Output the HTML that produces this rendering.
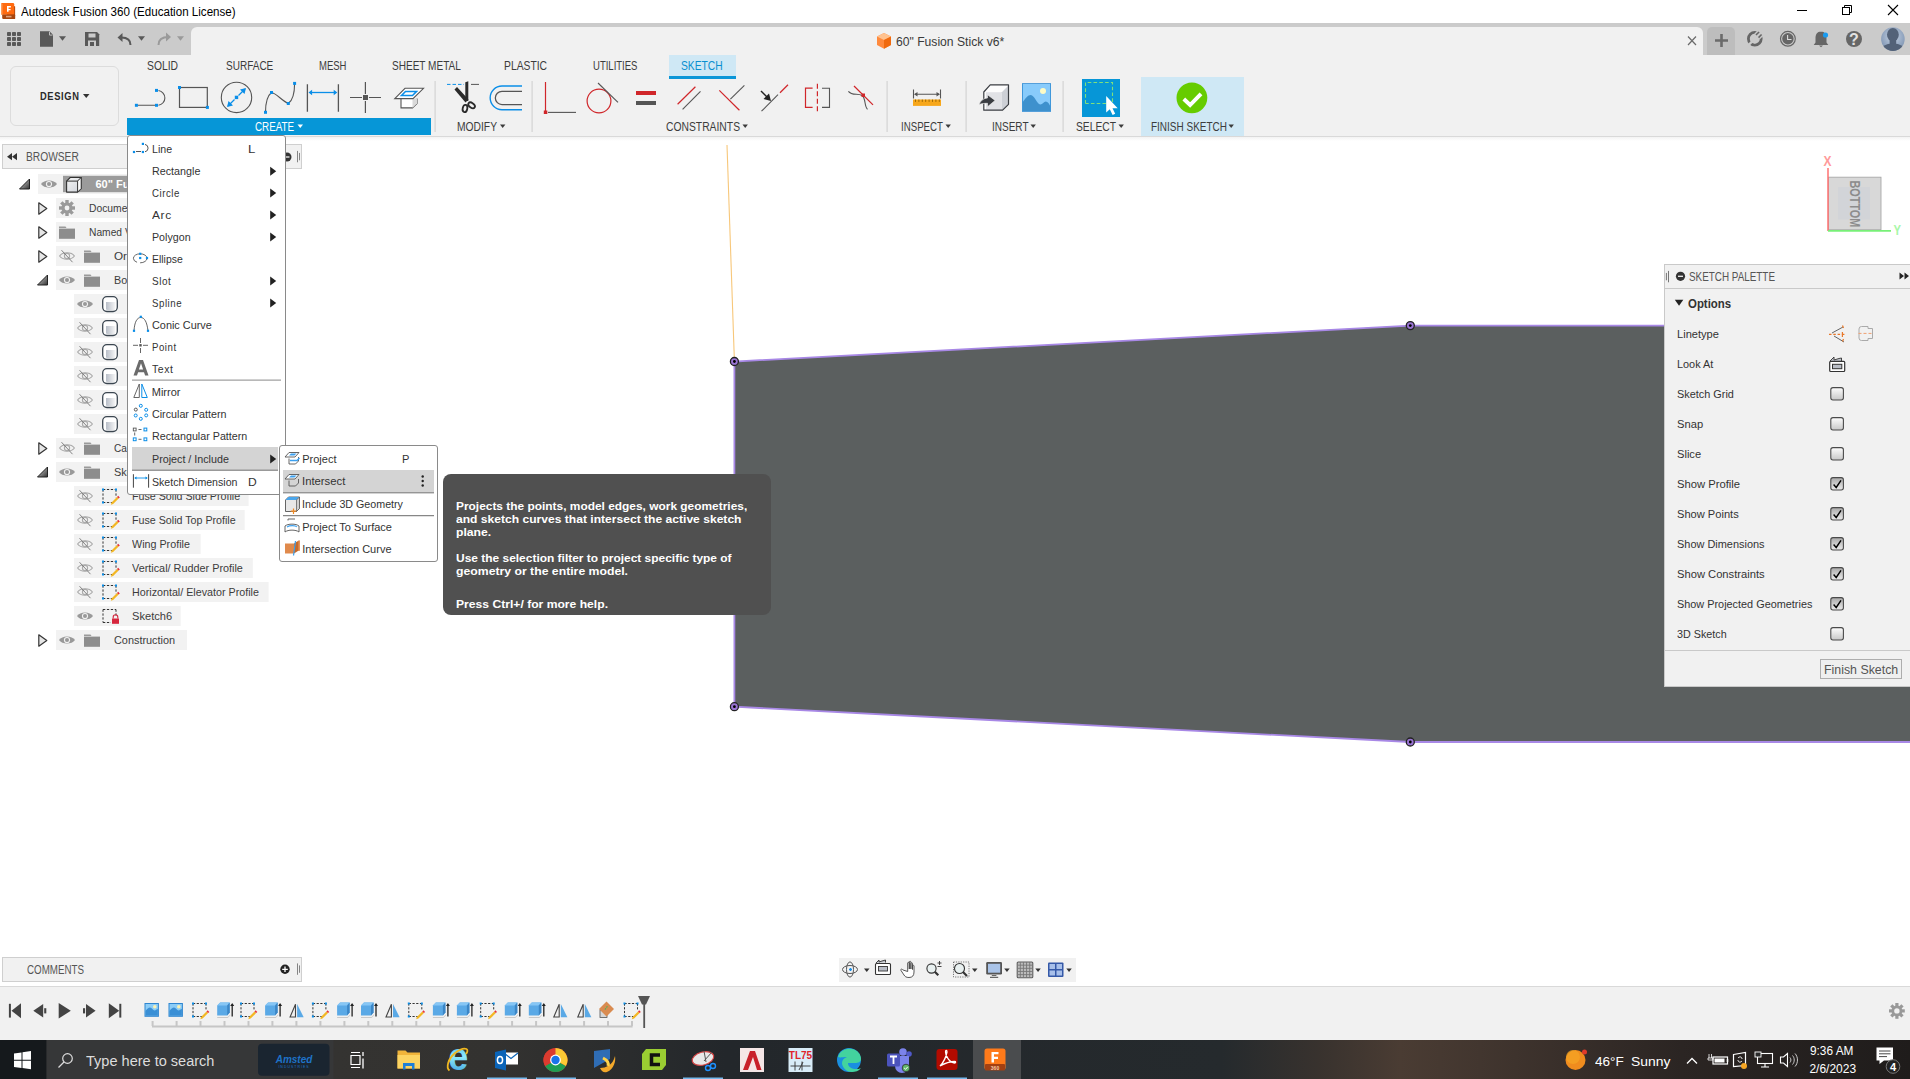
<!DOCTYPE html>
<html><head><meta charset="utf-8"><style>
*{box-sizing:border-box;margin:0;padding:0}
html,body{width:1910px;height:1079px;overflow:hidden;background:#fff;font-family:"Liberation Sans",sans-serif;color:#3c3c3c;position:relative}
div,svg{position:absolute}
.t{white-space:nowrap;line-height:normal;transform-origin:0 0}
svg{overflow:visible}

</style></head><body>
<div style="left:0;top:0;width:1910px;height:23px;background:#fff"></div>
<div style="left:0;top:23px;width:1910px;height:32px;background:#cbcbcb"></div>
<div style="left:191px;top:27px;width:1512px;height:28px;background:#f1f1f1;border-radius:6px 6px 0 0"></div>
<div style="left:1707px;top:27px;width:28px;height:28px;background:#bdbdbd;border-radius:5px 5px 0 0"></div>
<div style="left:0;top:55px;width:1910px;height:82px;background:#f1f1f1;border-bottom:1px solid #d9d9d9"></div>
<div style="left:0;top:137px;width:1910px;height:4px;background:linear-gradient(#f3f3f3,#fff)"></div>
<div style="left:0;top:986px;width:1910px;height:54px;background:#f1f1f1;border-top:1px solid #d9d9d9"></div>
<div style="left:0;top:1040px;width:1910px;height:39px;background:linear-gradient(90deg,#1f2225 0%,#343331 17.4%,#333230 26%,#2a2c2d 33%,#23272b 38%,#252a2d 64%,#38322e 69%,#4a3c33 73.3%,#42362f 77.5%,#2b2523 88%,#1f1c1b 100%)"></div>
<svg style="left:0;top:0" width="1910" height="55">
<path d="M14 6l1.1 .6V18.9H3z" fill="#b24a12"/>
<rect x="1" y="2.9" width="13.2" height="11.8" rx="1.3" fill="#ff6a10"/>
<rect x="1" y="4" width="1.5" height="10.5" fill="#ff9a55"/>
<rect x="2.2" y="14.5" width="12.9" height="4.4" rx="0.8" fill="#a8460f"/>
<path d="M7 6h3.9v1.5H8.6v1.4h2v1.4h-2v1.5H7z" fill="#fff"/>
<rect x="6" y="15.8" width="5.5" height="1.6" fill="#e8b89a" opacity="0.8"/>
<path d="M1797 10.5h10" stroke="#000" stroke-width="1"/>
<rect x="1842.5" y="7.5" width="7" height="7" fill="none" stroke="#000"/>
<path d="M1844.5 7.5v-2h7v7h-2" fill="none" stroke="#000"/>
<path d="M1888 5l10 10M1898 5l-10 10" stroke="#000" stroke-width="1.1"/>
<!-- strip icons -->
<g fill="#595959">
<rect x="7" y="32" width="4" height="4" rx="0.8"/><rect x="12" y="32" width="4" height="4" rx="0.8"/><rect x="17" y="32" width="4" height="4" rx="0.8"/>
<rect x="7" y="37" width="4" height="4" rx="0.8"/><rect x="12" y="37" width="4" height="4" rx="0.8"/><rect x="17" y="37" width="4" height="4" rx="0.8"/>
<rect x="7" y="42" width="4" height="4" rx="0.8"/><rect x="12" y="42" width="4" height="4" rx="0.8"/><rect x="17" y="42" width="4" height="4" rx="0.8"/>
<path d="M40 31.3h9.5l3.5 3.5v11.9h-13z"/><path d="M49.5 31.8v3.3h3" fill="none" stroke="#cbcbcb" stroke-width="0.9"/>
<path d="M59 36.2h7l-3.5 4.6z"/>
<path d="M85 32h12l2.2 2.2V46H85z"/>
<path d="M138 36.2h7l-3.5 4.6z"/>
</g>
<rect x="88.5" y="33.5" width="7" height="4" fill="#cbcbcb"/>
<rect x="88" y="40.5" width="8" height="5.5" fill="#cbcbcb"/>
<rect x="90" y="42" width="4" height="4" fill="#595959"/>
<path d="M130.5 45c0-5-3-7.5-9-7.5" fill="none" stroke="#595959" stroke-width="2"/>
<path d="M117.5 37.5l5-4.5v9z" fill="#595959"/>
<path d="M158.5 45c0-6 4-8 10-8" fill="none" stroke="#9a9a9a" stroke-width="2"/>
<path d="M171 37l-5-4.5v9z" fill="#9a9a9a"/>
<path d="M177 36.2h7l-3.5 4.6z" fill="#9a9a9a"/>
<!-- doc tab -->
<path d="M884 33l7 3.5v8.5l-7 3.8-7-3.8v-8.5z" fill="#ff8a3d"/>
<path d="M877 36.5l7 3.5 7-3.5-7-3.5z" fill="#ffc28f"/>
<path d="M884 40l7-3.5v8.5l-7 3.8z" fill="#f06a0e"/>
<path d="M1688 36.5l8 8.5M1696 36.5l-8 8.5" stroke="#6a6a6a" stroke-width="1.2"/>
<path d="M1721.5 34v13M1715 40.5h13" stroke="#6b6b6b" stroke-width="2.6"/>
<!-- right icons -->
<circle cx="1754.8" cy="38.8" r="6.4" fill="none" stroke="#666" stroke-width="2.8"/>
<g transform="rotate(45 1754.8 38.8)" fill="#cbcbcb"><rect x="1750.8" y="30.5" width="8" height="5"/><rect x="1751" y="35" width="7.6" height="7.5" rx="2"/><rect x="1753.6" y="41" width="2.4" height="8"/></g>
<g transform="rotate(45 1754.8 38.8)" fill="#666"><rect x="1752.2" y="31" width="1.6" height="4.3"/><rect x="1755.8" y="31" width="1.6" height="4.3"/></g>
<circle cx="1787.9" cy="38.8" r="7.4" fill="none" stroke="#666" stroke-width="1.2"/>
<circle cx="1787.9" cy="38.8" r="5.7" fill="#666"/>
<path d="M1787.6 35v4.5h3.9" fill="none" stroke="#ddd" stroke-width="1.1"/>
<path d="M1821 31.5c-4 0-5.5 3-5.5 7v4l-1.8 2.4h14.6l-1.8-2.4v-4c0-4-1.5-7-5.5-7z" fill="#666"/>
<path d="M1819 45.6h4l-2 1.6z" fill="#666"/>
<circle cx="1825.5" cy="35" r="2.6" fill="#1a9bef"/>
<circle cx="1854" cy="39" r="8" fill="#666"/>
<text x="1854" y="45" font-size="16" font-weight="bold" fill="#e2e2e2" text-anchor="middle" font-family="Liberation Sans">?</text>
<defs><radialGradient id="av" cx="50%" cy="40%" r="60%"><stop offset="0" stop-color="#c7d3e3"/><stop offset="1" stop-color="#7f95b3"/></radialGradient></defs>
<clipPath id="avc"><circle cx="1892.9" cy="39.1" r="11.8"/></clipPath>
<circle cx="1892.9" cy="39.1" r="11.8" fill="url(#av)"/>
<g clip-path="url(#avc)" fill="#536278"><ellipse cx="1892.9" cy="34.8" rx="5.9" ry="6.8"/><rect x="1889.6" y="39" width="6.6" height="6"/><ellipse cx="1892.9" cy="51.5" rx="13" ry="8"/></g>
</svg>
<div class="t" style="left:21.22px;top:4.74px;font-size:12px;color:#000;font-weight:normal;letter-spacing:0px;transform:scaleX(0.9663);">Autodesk Fusion 360 (Education License)</div>
<div class="t" style="left:895.79px;top:34.29px;font-size:13px;color:#3a3a3a;font-weight:normal;letter-spacing:0px;transform:scaleX(0.9338);">60&quot; Fusion Stick v6*</div>
<div style="left:10px;top:66px;width:109px;height:60px;border:1px solid #dcdcdc;border-radius:6px"></div>
<div style="left:669px;top:55px;width:67px;height:24px;background:#cfe8f5"></div>
<div style="left:669px;top:76px;width:67px;height:3px;background:#0a96d8"></div>
<div style="left:1141px;top:77px;width:103px;height:59px;background:#cfe8f5"></div>
<div style="left:127px;top:118px;width:304px;height:17px;background:#0696d7"></div>
<div class="t" style="left:39.53px;top:89.71px;font-size:11.5px;color:#2a2a2a;font-weight:bold;letter-spacing:0.8px;transform:scaleX(0.8095);">DESIGN</div>
<div class="t" style="left:147.48px;top:59.44px;font-size:12px;color:#3c3c3c;font-weight:normal;letter-spacing:0px;transform:scaleX(0.8618);">SOLID</div>
<div class="t" style="left:225.90px;top:59.44px;font-size:12px;color:#3c3c3c;font-weight:normal;letter-spacing:0px;transform:scaleX(0.8346);">SURFACE</div>
<div class="t" style="left:319.22px;top:59.44px;font-size:12px;color:#3c3c3c;font-weight:normal;letter-spacing:0px;transform:scaleX(0.7918);">MESH</div>
<div class="t" style="left:391.50px;top:59.44px;font-size:12px;color:#3c3c3c;font-weight:normal;letter-spacing:0px;transform:scaleX(0.8368);">SHEET METAL</div>
<div class="t" style="left:504.48px;top:59.44px;font-size:12px;color:#3c3c3c;font-weight:normal;letter-spacing:0px;transform:scaleX(0.8604);">PLASTIC</div>
<div class="t" style="left:592.52px;top:59.44px;font-size:12px;color:#3c3c3c;font-weight:normal;letter-spacing:0px;transform:scaleX(0.7937);">UTILITIES</div>
<div class="t" style="left:681.49px;top:59.44px;font-size:12px;color:#0a8fd0;font-weight:normal;letter-spacing:0px;transform:scaleX(0.8573);">SKETCH</div>
<div class="t" style="left:255.31px;top:120.34px;font-size:12px;color:#fff;font-weight:normal;letter-spacing:0px;transform:scaleX(0.8200);">CREATE</div>
<div class="t" style="left:457.49px;top:120.44px;font-size:12px;color:#3c3c3c;font-weight:normal;letter-spacing:0px;transform:scaleX(0.8578);">MODIFY</div>
<div class="t" style="left:666.48px;top:120.44px;font-size:12px;color:#3c3c3c;font-weight:normal;letter-spacing:0px;transform:scaleX(0.8608);">CONSTRAINTS</div>
<div class="t" style="left:900.52px;top:120.44px;font-size:12px;color:#3c3c3c;font-weight:normal;letter-spacing:0px;transform:scaleX(0.8070);">INSPECT</div>
<div class="t" style="left:991.50px;top:120.44px;font-size:12px;color:#3c3c3c;font-weight:normal;letter-spacing:0px;transform:scaleX(0.8336);">INSERT</div>
<div class="t" style="left:1076.49px;top:120.44px;font-size:12px;color:#3c3c3c;font-weight:normal;letter-spacing:0px;transform:scaleX(0.8575);">SELECT</div>
<div class="t" style="left:1150.50px;top:120.44px;font-size:12px;color:#3c3c3c;font-weight:normal;letter-spacing:0px;transform:scaleX(0.8320);">FINISH SKETCH</div>
<svg style="left:0;top:0" width="1910" height="140">
<g fill="#333">
</g>
<path d="M83 94h6.5l-3.25 4z" fill="#333"/>
<path d="M297.5 124.5h5.5l-2.75 3.6z" fill="#fff"/>
<path d="M500 124.6h5.4l-2.7 3.5z" fill="#3c3c3c"/>
<path d="M742.5 124.6h5.4l-2.7 3.5z" fill="#3c3c3c"/>
<path d="M945.5 124.6h5.4l-2.7 3.5z" fill="#3c3c3c"/>
<path d="M1030.5 124.6h5.4l-2.7 3.5z" fill="#3c3c3c"/>
<path d="M1118.5 124.6h5.4l-2.7 3.5z" fill="#3c3c3c"/>
<path d="M1228.5 124.6h5.4l-2.7 3.5z" fill="#3c3c3c"/>
<rect x="434.5" y="81" width="1.2" height="51" fill="#d3d3d3"/>
<rect x="531.5" y="81" width="1.2" height="51" fill="#d3d3d3"/>
<rect x="886.5" y="81" width="1.2" height="51" fill="#d3d3d3"/>
<rect x="965.5" y="81" width="1.2" height="51" fill="#d3d3d3"/>
<rect x="1062.5" y="81" width="1.2" height="51" fill="#d3d3d3"/>
<path d="M137.5 105.3H155.5M158.5 90.5a7.6 7.5 0 0 1 0 14.8" fill="none" stroke="#555" stroke-width="1.1"/>
<rect x="134.9" y="103.8" width="3" height="3" fill="#0a8ee8"/>
<rect x="155.0" y="103.8" width="3" height="3" fill="#0a8ee8"/>
<rect x="155.0" y="88.9" width="3" height="3" fill="#0a8ee8"/>
<rect x="179.5" y="87.5" width="27.8" height="19.9" fill="none" stroke="#555" stroke-width="1.2"/>
<rect x="178.0" y="86.0" width="3" height="3" fill="#0a8ee8"/>
<rect x="205.9" y="105.9" width="3" height="3" fill="#0a8ee8"/>
<circle cx="236.5" cy="97.4" r="15.2" fill="none" stroke="#555" stroke-width="1.1"/>
<path d="M228 106L234.5 99.5M238.5 95.5L245 89" stroke="#0a8ee8" stroke-width="1.3"/><path d="M227 107l1.5-6 4.5 4.5z M246 88l-6 1.5 4.5 4.5z" fill="#0a8ee8"/>
<rect x="234.8" y="95.7" width="3.4" height="3.4" fill="#0a8ee8"/>
<path d="M265.5 112.3C265.5 104 267 96 271.5 92.5 276 93 282 101 288.3 103.5 293 100 294.6 92 294.6 83.4" fill="none" stroke="#555" stroke-width="1.1"/>
<rect x="264.0" y="110.8" width="3" height="3" fill="#0a8ee8"/>
<rect x="270.0" y="91.0" width="3" height="3" fill="#0a8ee8"/>
<rect x="286.8" y="102.0" width="3" height="3" fill="#0a8ee8"/>
<rect x="293.1" y="81.9" width="3" height="3" fill="#0a8ee8"/>
<path d="M307.4 84.3v27.5M338.4 84.3v27.5" stroke="#555" stroke-width="1.3"/><path d="M310 92.5h26" stroke="#0a8ee8" stroke-width="1.3"/><path d="M308.5 92.5l3.6-2.8v5.6zM337.3 92.5l-3.6-2.8v5.6z" fill="#0a8ee8"/>
<path d="M350 97.5h12M369 97.5h12M365.4 82v12M365.4 101v12" stroke="#555" stroke-width="1.2"/><rect x="363" y="95" width="5" height="5" fill="#555"/>
<path d="M401 98.6v9.3h11.5l4.5-4.5v-5" fill="#fff" stroke="#555" stroke-width="1.1"/><path d="M412.5 98.6v9.3l4.5-4.5v-5z" fill="#d9d9d9"/><path d="M394.8 98.6L405 88.3H423.5L413 98.6z" fill="#fff" stroke="#555" stroke-width="1.1"/><path d="M401.5 95.5l4-4h11l-4 4z" fill="none" stroke="#0a8ee8" stroke-width="1.6"/>
<path d="M447 84.4h17" stroke="#0a8ee8" stroke-width="1" stroke-dasharray="3.5 2"/><path d="M471 84.4h8" stroke="#555" stroke-width="1"/>
<path d="M454.5 89.5l2.5-2.5 11.5 12.5-3 3z" fill="#2a2a2a"/><path d="M465.3 82.2l3-1v19.8h-3z" fill="#2a2a2a"/><ellipse cx="465" cy="108.5" rx="2.3" ry="3.7" fill="none" stroke="#2a2a2a" stroke-width="1.8" transform="rotate(12 465 108.5)"/><ellipse cx="471.6" cy="105.3" rx="2.3" ry="3.7" fill="none" stroke="#2a2a2a" stroke-width="1.8" transform="rotate(-55 471.6 105.3)"/>
<path d="M522 86h-20a11.85 11.85 0 0 0 0 23.7h20" fill="none" stroke="#0a8ee8" stroke-width="1.4"/><path d="M522 91.3h-20a6.65 6.65 0 0 0 0 13.3h20" fill="none" stroke="#555" stroke-width="1.3"/>
<path d="M545.5 82v29" stroke="#d0262a" stroke-width="1.2"/><rect x="543.8" y="110.5" width="3.5" height="3.5" fill="#d0262a"/><path d="M548 112.4h28" stroke="#555" stroke-width="1.1"/>
<circle cx="599" cy="101" r="11.9" fill="none" stroke="#d0262a" stroke-width="1.2"/><path d="M598 83L618 102.4" stroke="#555" stroke-width="1.1"/>
<rect x="636" y="91" width="20" height="4" fill="#d0262a"/><rect x="636" y="101" width="20" height="4" fill="#555"/>
<path d="M677.6 104.3L695.4 86.7" stroke="#d0262a" stroke-width="1.2"/><path d="M682.6 109.3L700.5 91.3" stroke="#555" stroke-width="1.1"/>
<path d="M719.3 90.4L739.4 110.2" stroke="#d0262a" stroke-width="1.2"/><path d="M730.4 99.2L744.4 85.4" stroke="#555" stroke-width="1.1"/>
<path d="M761.5 111.2L778 94.6" stroke="#555" stroke-width="1.1"/><path d="M780 92.7L788 84.8" stroke="#d0262a" stroke-width="1.2"/><path d="M761 91L768 98" stroke="#222" stroke-width="1.5"/><path d="M771 101l-7.5-2 5.5-5.5z" fill="#222"/>
<path d="M812.6 88.2H805.5V107.4H812.6" fill="none" stroke="#d0262a" stroke-width="1.2"/><path d="M817.4 83.8v27.8" stroke="#d0262a" stroke-width="1.2" stroke-dasharray="5 2.5"/><path d="M822 88.2H829.5V107.4H822" fill="none" stroke="#555" stroke-width="1.1"/>
<path d="M854 86L873 104.9" stroke="#d0262a" stroke-width="1.2"/><path d="M848.4 91.3C852 96 858 93 862 95.5 866 98 864 106 867.5 109.3" fill="none" stroke="#555" stroke-width="1.1"/><rect x="861.5" y="93.5" width="3.5" height="3.5" fill="#d0262a"/>
<path d="M913.5 89.6v9M940.5 89.6v9M915 94.2h24" stroke="#555" stroke-width="1.1"/><path d="M914 94.2l3.5-2.2v4.4zM940 94.2l-3.5-2.2v4.4z" fill="#555"/>
<rect x="913" y="99.5" width="28" height="6.4" fill="#f7a71b"/>
<path d="M915.5 99.5v2.4M918.9 99.5v2.4M922.3 99.5v2.4M925.7 99.5v2.4M929.1 99.5v2.4M932.5 99.5v2.4M935.9 99.5v2.4M939.3 99.5v2.4" stroke="#8a5a00" stroke-width="0.8"/>
<path d="M983.8 92L990.2 84.8H1008.5V104.3L1002.6 110.2H983.8z" fill="#fdfdfd"/><path d="M986 92.2H1001.8V110.2H986z" fill="#e1e2e6"/><path d="M1001.8 92.2L1008.5 85.5V104.3L1001.8 110.2z" fill="#cdd0d6"/><path d="M983.8 92L990.2 84.8H1008.5V104.3L1002.6 110.2H983.8z" fill="none" stroke="#3a3d42" stroke-width="1.2" stroke-linejoin="round"/>
<path d="M979 104.5c1.5-3.5 4-6.2 8.5-6.5v-3.2l7.6 5.6-7.6 6.4v-3.5c-3.5 0-6 .3-8.5 1.2z" fill="#3a3d42" stroke="#f2f2f2" stroke-width="0.6"/>
<rect x="1022" y="83.2" width="29" height="28.6" fill="#2f8bd4"/><rect x="1022.8" y="84" width="27.4" height="27" fill="#88cbfb"/><path d="M1022.8 111V102c2.5-3.5 5-7 8-7 3.5 0 6 9 9.5 9.5 2.5 0 3.5-3 5.5-3 2 0 3.5 2.5 4.4 4.5V111z" fill="#3e91cd"/><circle cx="1043" cy="91" r="3" fill="#fdfbc6"/>
<rect x="1082" y="79" width="38" height="38" fill="#0696d7"/><path d="M1085.5 103.5V82.5H1112.5V103.5H1085.5" fill="none" stroke="#7fe07c" stroke-width="1.1" stroke-dasharray="3.6 2.2"/>
<path d="M1106.2 96v16.5l3.6-3.3 2.8 5.8 2.6-1.2-2.7-5.6h5.2z" fill="#fff"/>
<circle cx="1191.9" cy="97.8" r="15.4" fill="#66cc00"/><path d="M1183.8 99l6.3 6 10.9-11.2" fill="none" stroke="#fff" stroke-width="3.9"/>
</svg>
<svg style="left:0;top:0" width="1910" height="1079">
<path d="M727 145L734.4 361" stroke="#f7c77a" stroke-width="1.1"/>
<path d="M734.4 361.5L1410.3 325.6H1910V742H1410.3L734.4 706.7z" fill="#5b5f5f"/>
<path d="M1912 325.6H1410.3L734.4 361.5V706.7L1410.3 742H1912" fill="none" stroke="#a888e6" stroke-width="1.8"/>
<g fill="#9a74d4" stroke="#222" stroke-width="1.3">
<circle cx="734.4" cy="361.5" r="4"/><circle cx="1410.3" cy="325.6" r="4"/><circle cx="734.4" cy="706.7" r="4"/><circle cx="1410.3" cy="742" r="4"/>
</g>
<g fill="#000"><circle cx="734.4" cy="361.5" r="1.4"/><circle cx="1410.3" cy="325.6" r="1.4"/><circle cx="734.4" cy="706.7" r="1.4"/><circle cx="1410.3" cy="742" r="1.4"/></g>
<!-- viewcube -->
<rect x="1828.5" y="177.2" width="52.5" height="52.5" fill="#d8d8d8" stroke="#a8a8a8" stroke-width="0.9"/>
<rect x="1838" y="187" width="32" height="32.5" fill="#d2d4d8"/>
<path d="M1828 168v63" stroke="#ff7272" stroke-width="1.5"/>
<path d="M1828 230.8h63" stroke="#78f078" stroke-width="1.8"/>
<text x="1827.5" y="165.8" font-size="14" font-weight="bold" fill="#ff9a9a" text-anchor="middle" font-family="Liberation Sans" textLength="8" lengthAdjust="spacingAndGlyphs">X</text>
<text x="1897.3" y="235.4" font-size="14" font-weight="bold" fill="#a8f7a8" text-anchor="middle" font-family="Liberation Sans" textLength="7.5" lengthAdjust="spacingAndGlyphs">Y</text>
<text transform="translate(1849.9 180.4) rotate(90)" font-size="15" font-weight="bold" fill="#8c8c8c" font-family="Liberation Sans" textLength="47" lengthAdjust="spacingAndGlyphs">BOTTOM</text>
</svg>
<div style="left:2px;top:144px;width:300px;height:25px;background:#f1f1f1;border:1px solid #cfcfcf"></div>
<div class="t" style="left:26.49px;top:150.14px;font-size:12px;color:#555;font-weight:normal;letter-spacing:0px;transform:scaleX(0.8519);">BROWSER</div>
<svg style="left:0;top:0" width="310" height="700">
<defs>
<symbol id="eyeV" viewBox="0 0 16 11" overflow="visible"><path d="M0 5.3C3 0.5 13 0.5 16 5.3 13 10 3 10 0 5.3z" fill="#999"/><circle cx="8" cy="5.3" r="3.1" fill="#f2f2f2"/><circle cx="8" cy="5.3" r="2" fill="#999"/></symbol>
<symbol id="eyeH" viewBox="0 0 16 11" overflow="visible"><path d="M0.6 5.3C3.5 1 12.5 1 15.4 5.3 12.5 9.6 3.5 9.6 0.6 5.3z" fill="none" stroke="#aaa" stroke-width="1.1"/><circle cx="8" cy="5.3" r="2.6" fill="none" stroke="#aaa" stroke-width="1.1"/><path d="M2.5 -0.5L13.5 11.5" stroke="#777" stroke-width="0.9"/></symbol>
<symbol id="fold" viewBox="0 0 16 13" overflow="visible"><path d="M0 0.5h6.5l1 1.5H0z" fill="#9a9a9a"/><rect x="0" y="2.6" width="16" height="10.2" fill="#8d8d8d"/></symbol>
<symbol id="triO" viewBox="0 0 10 13" overflow="visible"><path d="M0.8 0.8L8.8 6.5 0.8 12.2z" fill="#e6e6e6" stroke="#333" stroke-width="1.2" stroke-linejoin="round"/></symbol>
<linearGradient id="tg" x1="0" y1="0" x2="1" y2="1"><stop offset="0" stop-color="#ddd"/><stop offset="1" stop-color="#333"/></linearGradient>
<symbol id="triS" viewBox="0 0 11 11" overflow="visible"><path d="M10.5 0.5V10.5H0.5z" fill="url(#tg)" stroke="#222" stroke-width="1"/></symbol>
<linearGradient id="bg1" x1="0" y1="0" x2="1" y2="0"><stop offset="0" stop-color="#b8bec8"/><stop offset="1" stop-color="#f7f7f7"/></linearGradient>
<symbol id="body" viewBox="0 0 16 16" overflow="visible"><rect x="0.7" y="0.7" width="14.6" height="14.8" rx="4.2" fill="#fff" stroke="#3b4650" stroke-width="1.3"/><path d="M4 6h9.5v7.5c-1 1-8.5 1-9.5 0z" fill="url(#bg1)"/></symbol>
<symbol id="sk" viewBox="0 0 16 16" overflow="visible"><path d="M1 1.5v13M1 14.5h10M1 1.5h13M14 1.5v8" fill="none" stroke="#333" stroke-width="1" stroke-dasharray="2.3 1.6"/>
<rect x="0" y="0.5" width="2" height="2" fill="#0a8ee8"/><rect x="13" y="0.5" width="2" height="2" fill="#0a8ee8"/><rect x="0" y="13.5" width="2" height="2" fill="#0a8ee8"/>
<path d="M9.5 14.5l5.5-5.5 1.6 1.6-5.5 5.5-2.2.6z" fill="#f3b724"/><path d="M15 9l1.2-1.2 1.6 1.6-1.2 1.2z" fill="#e8313a"/></symbol>
<symbol id="skL" viewBox="0 0 16 16" overflow="visible"><path d="M1 1.5v13M1 14.5h8M1 1.5h13M14 1.5v7" fill="none" stroke="#333" stroke-width="1" stroke-dasharray="2.3 1.6"/><path d="M11.2 10.5v-1.5a2.3 2.3 0 0 1 4.6 0v1.5" fill="none" stroke="#d7263d" stroke-width="1.1"/><rect x="10" y="10.5" width="7" height="5.3" fill="#d7263d"/></symbol>
<symbol id="gear" viewBox="0 0 16 16" overflow="visible"><g fill="#9a9a9a" transform="translate(8 8)"><circle r="5.6"/><rect x="-1.7" y="-8" width="3.4" height="4" transform="rotate(0)"/><rect x="-1.7" y="-8" width="3.4" height="4" transform="rotate(45)"/><rect x="-1.7" y="-8" width="3.4" height="4" transform="rotate(90)"/><rect x="-1.7" y="-8" width="3.4" height="4" transform="rotate(135)"/><rect x="-1.7" y="-8" width="3.4" height="4" transform="rotate(180)"/><rect x="-1.7" y="-8" width="3.4" height="4" transform="rotate(225)"/><rect x="-1.7" y="-8" width="3.4" height="4" transform="rotate(270)"/><rect x="-1.7" y="-8" width="3.4" height="4" transform="rotate(315)"/></g><circle cx="8" cy="8" r="2.4" fill="#f2f2f2"/></symbol>
<linearGradient id="cg" x1="0" y1="0" x2="1" y2="1"><stop offset="0" stop-color="#f5f5f5"/><stop offset="1" stop-color="#cfd3da"/></linearGradient>
<symbol id="cube" viewBox="0 0 16 16" overflow="visible"><path d="M0.6 4.6l3.6-3.6h11v11l-3.6 3.6H0.6z" fill="url(#cg)" stroke="#333" stroke-width="1.1" stroke-linejoin="round"/><path d="M11.6 4.6v11M0.6 4.6h11l3.6-3.6" fill="none" stroke="#333" stroke-width="1"/><path d="M11.6 4.6l3.6-3.6v11l-3.6 3.6z" fill="#fafafa" stroke="#333" stroke-width="0.9"/></symbol>
</defs>
<rect x="38" y="174" width="200" height="20" fill="#f2f2f2"/>
<use href="#triS" x="19" y="178.5" width="11" height="11"/>
<use href="#eyeV" x="41" y="178.8" width="16" height="11"/>
<rect x="63" y="175.8" width="120" height="16.4" fill="#9b9b9b"/>
<use href="#cube" x="66" y="176.5" width="16" height="16"/>
<rect x="56" y="198" width="160" height="20" fill="#f2f2f2"/>
<use href="#triO" x="38" y="202" width="10" height="13"/>
<use href="#gear" x="59" y="200" width="16" height="16"/>
<rect x="56" y="222" width="120" height="20" fill="#f2f2f2"/>
<use href="#triO" x="38" y="226" width="10" height="13"/>
<use href="#fold" x="59" y="226" width="16" height="13"/>
<rect x="56" y="246" width="100" height="20" fill="#f2f2f2"/>
<use href="#triO" x="38" y="250" width="10" height="13"/>
<use href="#eyeH" x="59" y="250.7" width="16" height="11"/>
<use href="#fold" x="84" y="250" width="16" height="13"/>
<rect x="56" y="270" width="100" height="20" fill="#f2f2f2"/>
<use href="#triS" x="37" y="274.5" width="11" height="11"/>
<use href="#eyeV" x="59" y="274.7" width="16" height="11"/>
<use href="#fold" x="84" y="274" width="16" height="13"/>
<rect x="74" y="294" width="120" height="20" fill="#f2f2f2"/>
<use href="#eyeV" x="77" y="298.7" width="16" height="11"/>
<use href="#body" x="102" y="296" width="16" height="16"/>
<rect x="74" y="318" width="120" height="20" fill="#f2f2f2"/>
<use href="#eyeH" x="77" y="322.7" width="16" height="11"/>
<use href="#body" x="102" y="320" width="16" height="16"/>
<rect x="74" y="342" width="120" height="20" fill="#f2f2f2"/>
<use href="#eyeH" x="77" y="346.7" width="16" height="11"/>
<use href="#body" x="102" y="344" width="16" height="16"/>
<rect x="74" y="366" width="120" height="20" fill="#f2f2f2"/>
<use href="#eyeH" x="77" y="370.7" width="16" height="11"/>
<use href="#body" x="102" y="368" width="16" height="16"/>
<rect x="74" y="390" width="120" height="20" fill="#f2f2f2"/>
<use href="#eyeH" x="77" y="394.7" width="16" height="11"/>
<use href="#body" x="102" y="392" width="16" height="16"/>
<rect x="74" y="414" width="120" height="20" fill="#f2f2f2"/>
<use href="#eyeH" x="77" y="418.7" width="16" height="11"/>
<use href="#body" x="102" y="416" width="16" height="16"/>
<rect x="56" y="438" width="120" height="20" fill="#f2f2f2"/>
<use href="#triO" x="38" y="442" width="10" height="13"/>
<use href="#eyeH" x="59" y="442.7" width="16" height="11"/>
<use href="#fold" x="84" y="442" width="16" height="13"/>
<rect x="56" y="462" width="120" height="20" fill="#f2f2f2"/>
<use href="#triS" x="37" y="466.5" width="11" height="11"/>
<use href="#eyeV" x="59" y="466.7" width="16" height="11"/>
<use href="#fold" x="84" y="466" width="16" height="13"/>
<rect x="74" y="486" width="174.6" height="20" fill="#f2f2f2"/>
<use href="#eyeH" x="77" y="490.7" width="16" height="11"/>
<use href="#sk" x="102" y="488" width="16" height="16"/>
<rect x="74" y="510" width="170.7" height="20" fill="#f2f2f2"/>
<use href="#eyeH" x="77" y="514.7" width="16" height="11"/>
<use href="#sk" x="102" y="512" width="16" height="16"/>
<rect x="74" y="534" width="126.7" height="20" fill="#f2f2f2"/>
<use href="#eyeH" x="77" y="538.7" width="16" height="11"/>
<use href="#sk" x="102" y="536" width="16" height="16"/>
<rect x="74" y="558" width="178.8" height="20" fill="#f2f2f2"/>
<use href="#eyeH" x="77" y="562.7" width="16" height="11"/>
<use href="#sk" x="102" y="560" width="16" height="16"/>
<rect x="74" y="582" width="194.6" height="20" fill="#f2f2f2"/>
<use href="#eyeH" x="77" y="586.7" width="16" height="11"/>
<use href="#sk" x="102" y="584" width="16" height="16"/>
<rect x="74" y="606" width="106.7" height="20" fill="#f2f2f2"/>
<use href="#eyeV" x="77" y="610.7" width="16" height="11"/>
<use href="#skL" x="102" y="608" width="16" height="16"/>
<rect x="56" y="630" width="131" height="20" fill="#f2f2f2"/>
<use href="#triO" x="38" y="634" width="10" height="13"/>
<use href="#eyeV" x="59" y="634.7" width="16" height="11"/>
<use href="#fold" x="84" y="634" width="16" height="13"/>
<circle cx="287" cy="157" r="4.5" fill="#333"/><path d="M284.5 157h5" stroke="#f1f1f1" stroke-width="1.3"/><path d="M297.5 151.3v10.6M299.5 153.3v6.6" stroke="#777" stroke-width="0.9" stroke-linecap="round"/>
<path d="M7 156.7l5-3.6v7.2zM12 156.7l5-3.6v7.2z" fill="#333"/>
</svg>
<div class="t" style="left:95.45px;top:177.98px;font-size:11px;color:#fff;font-weight:bold;letter-spacing:0px;">60&quot; Fusion Stick v6</div>
<div class="t" style="left:88.68px;top:201.98px;font-size:11px;color:#3c3c3c;font-weight:normal;letter-spacing:0px;transform:scaleX(0.9365);">Document Settings</div>
<div class="t" style="left:88.69px;top:225.98px;font-size:11px;color:#3c3c3c;font-weight:normal;letter-spacing:0px;transform:scaleX(0.9315);">Named Views</div>
<div class="t" style="left:113.82px;top:249.98px;font-size:11px;color:#3c3c3c;font-weight:normal;letter-spacing:0px;transform:scaleX(1.0622);">Origin</div>
<div class="t" style="left:113.86px;top:273.98px;font-size:11px;color:#3c3c3c;font-weight:normal;letter-spacing:0px;transform:scaleX(0.9836);">Bodies</div>
<div class="t" style="left:131.27px;top:297.98px;font-size:11px;color:#3c3c3c;font-weight:normal;letter-spacing:0px;transform:scaleX(1.3293);">Body1</div>
<div class="t" style="left:131.27px;top:321.98px;font-size:11px;color:#3c3c3c;font-weight:normal;letter-spacing:0px;transform:scaleX(1.3293);">Body2</div>
<div class="t" style="left:131.27px;top:345.98px;font-size:11px;color:#3c3c3c;font-weight:normal;letter-spacing:0px;transform:scaleX(1.3293);">Body3</div>
<div class="t" style="left:131.27px;top:369.98px;font-size:11px;color:#3c3c3c;font-weight:normal;letter-spacing:0px;transform:scaleX(1.3293);">Body4</div>
<div class="t" style="left:131.27px;top:393.98px;font-size:11px;color:#3c3c3c;font-weight:normal;letter-spacing:0px;transform:scaleX(1.3293);">Body5</div>
<div class="t" style="left:131.27px;top:417.98px;font-size:11px;color:#3c3c3c;font-weight:normal;letter-spacing:0px;transform:scaleX(1.3293);">Body6</div>
<div class="t" style="left:113.89px;top:441.98px;font-size:11px;color:#3c3c3c;font-weight:normal;letter-spacing:0px;transform:scaleX(0.9202);">Canvases</div>
<div class="t" style="left:113.85px;top:465.98px;font-size:11px;color:#3c3c3c;font-weight:normal;letter-spacing:0px;transform:scaleX(0.9967);">Sketches</div>
<div class="t" style="left:131.57px;top:489.98px;font-size:11px;color:#3c3c3c;font-weight:normal;letter-spacing:0px;transform:scaleX(0.9712);">Fuse Solid Side Profile</div>
<div class="t" style="left:131.57px;top:513.98px;font-size:11px;color:#3c3c3c;font-weight:normal;letter-spacing:0px;transform:scaleX(0.9707);">Fuse Solid Top Profile</div>
<div class="t" style="left:131.56px;top:537.98px;font-size:11px;color:#3c3c3c;font-weight:normal;letter-spacing:0px;transform:scaleX(0.9760);">Wing Profile</div>
<div class="t" style="left:131.56px;top:561.98px;font-size:11px;color:#3c3c3c;font-weight:normal;letter-spacing:0px;transform:scaleX(0.9857);">Vertical/ Rudder Profile</div>
<div class="t" style="left:131.56px;top:585.98px;font-size:11px;color:#3c3c3c;font-weight:normal;letter-spacing:0px;transform:scaleX(0.9743);">Horizontal/ Elevator Profile</div>
<div class="t" style="left:131.54px;top:609.98px;font-size:11px;color:#3c3c3c;font-weight:normal;letter-spacing:0px;transform:scaleX(1.0092);">Sketch6</div>
<div class="t" style="left:113.86px;top:633.98px;font-size:11px;color:#3c3c3c;font-weight:normal;letter-spacing:0px;transform:scaleX(0.9893);">Construction</div>
<div style="left:127px;top:135px;width:158.5px;height:360px;background:#fff;border:1px solid #8a8a8a;border-radius:3px"></div>
<div style="left:132px;top:447px;width:146px;height:23px;background:#d4d4d4"></div>
<svg style="left:0;top:0" width="450" height="600">
<rect x="132" y="379.6" width="149" height="1" fill="#8a8a8a"/>
<rect x="132" y="469.7" width="146" height="1" fill="#6e6e6e"/>
<path d="M270.2 166.8L276.2 171.3L270.2 175.8z" fill="#222"/>
<path d="M270.2 188.5L276.2 193L270.2 197.5z" fill="#222"/>
<path d="M270.2 210.5L276.2 215L270.2 219.5z" fill="#222"/>
<path d="M270.2 232.5L276.2 237L270.2 241.5z" fill="#222"/>
<path d="M270.2 276.5L276.2 281L270.2 285.5z" fill="#222"/>
<path d="M270.2 298.5L276.2 303L270.2 307.5z" fill="#222"/>
<path d="M270.2 454.5L276.2 459L270.2 463.5z" fill="#222"/>
<path d="M136 151.5h5M145 144.4a4 3.8 0 0 1 0 7.4" fill="none" stroke="#555" stroke-width="1"/><rect x="132.9" y="150.9" width="2.2" height="2.2" fill="#0a8ee8"/><rect x="141.8" y="150.9" width="2.2" height="2.2" fill="#0a8ee8"/><rect x="141.8" y="142.8" width="2.2" height="2.2" fill="#0a8ee8"/>
<ellipse cx="140.2" cy="258.3" rx="6.8" ry="4.5" fill="none" stroke="#555" stroke-width="0.9" stroke-dasharray="9 3 30"/><rect x="139.1" y="252.70000000000002" width="2.2" height="2.2" fill="#0a8ee8"/><rect x="139.1" y="256.9" width="2.2" height="2.2" fill="#0a8ee8"/><rect x="145.9" y="256.9" width="2.2" height="2.2" fill="#0a8ee8"/>
<path d="M134 331C134.5 322 137 317.5 140.8 317.5 144.5 317.5 147 322 148 331" fill="none" stroke="#555" stroke-width="0.9"/><rect x="132.9" y="329.7" width="2.2" height="2.2" fill="#0a8ee8"/><rect x="139.70000000000002" y="315.7" width="2.2" height="2.2" fill="#0a8ee8"/><rect x="146.9" y="329.7" width="2.2" height="2.2" fill="#0a8ee8"/>
<path d="M133 345.3h5M143 345.3h5M140.5 338v5M140.5 348v5" stroke="#555" stroke-width="0.9"/><rect x="139.3" y="344.1" width="2.4" height="2.4" fill="#555"/>
<path d="M133.5 375.5L139 360h4l5.5 15.5h-3.4l-1.1-3.3h-5.9l-1.1 3.3zM138.9 369.6h4.2l-2.1-6.3z" fill="#6b6b6b"/>
<path d="M139.3 384v13.5h-5.5z" fill="none" stroke="#555" stroke-width="0.9"/><path d="M141.8 384v13.5h5.5z" fill="none" stroke="#0a8ee8" stroke-width="1"/>
<circle cx="135.8" cy="409.6" r="1.5" fill="none" stroke="#555" stroke-width="1"/><circle cx="140.8" cy="405.8" r="1.5" fill="none" stroke="#0a8ee8" stroke-width="1"/><circle cx="146.2" cy="409.8" r="1.5" fill="none" stroke="#0a8ee8" stroke-width="1"/><circle cx="135.7" cy="415.5" r="1.5" fill="none" stroke="#0a8ee8" stroke-width="1"/><circle cx="146.2" cy="415.4" r="1.5" fill="none" stroke="#0a8ee8" stroke-width="1"/><circle cx="140.8" cy="418.8" r="1.5" fill="none" stroke="#0a8ee8" stroke-width="1"/>
<rect x="133.3" y="428.1" width="2.8" height="2.8" fill="none" stroke="#555" stroke-width="0.9"/><rect x="144" y="428.1" width="2.8" height="2.8" fill="none" stroke="#0a8ee8" stroke-width="1"/><rect x="133.3" y="437.9" width="2.8" height="2.8" fill="none" stroke="#0a8ee8" stroke-width="1"/><rect x="144" y="437.9" width="2.8" height="2.8" fill="none" stroke="#0a8ee8" stroke-width="1"/><path d="M138.5 429.5h3M134.7 432.5v3M138.5 439.3h3" stroke="#555" stroke-width="0.9"/>
<path d="M133.4 474.2v13.5M148.6 474.2v13.5" stroke="#444" stroke-width="1"/><path d="M135 478h12" stroke="#0a8ee8" stroke-width="0.9"/><path d="M134.2 478l2.3-1.6v3.2zM147.8 478l-2.3-1.6v3.2z" fill="#0a8ee8"/>
</svg>
<div class="t" style="left:151.77px;top:142.98px;font-size:11px;color:#333;font-weight:normal;letter-spacing:0px;transform:scaleX(0.9646);">Line</div>
<div class="t" style="left:151.76px;top:165.28px;font-size:11px;color:#333;font-weight:normal;letter-spacing:0px;transform:scaleX(0.9766);">Rectangle</div>
<div class="t" style="left:151.82px;top:186.98px;font-size:11px;color:#333;font-weight:normal;letter-spacing:0.6px;transform:scaleX(0.8796);">Circle</div>
<div class="t" style="left:151.70px;top:208.98px;font-size:11px;color:#333;font-weight:normal;letter-spacing:0.6px;transform:scaleX(1.0843);">Arc</div>
<div class="t" style="left:151.77px;top:230.98px;font-size:11px;color:#333;font-weight:normal;letter-spacing:0px;transform:scaleX(0.9702);">Polygon</div>
<div class="t" style="left:151.78px;top:252.98px;font-size:11px;color:#333;font-weight:normal;letter-spacing:0px;transform:scaleX(0.9488);">Ellipse</div>
<div class="t" style="left:151.80px;top:274.98px;font-size:11px;color:#333;font-weight:normal;letter-spacing:0.6px;transform:scaleX(0.9056);">Slot</div>
<div class="t" style="left:151.82px;top:296.98px;font-size:11px;color:#333;font-weight:normal;letter-spacing:0.6px;transform:scaleX(0.8806);">Spline</div>
<div class="t" style="left:151.76px;top:318.98px;font-size:11px;color:#333;font-weight:normal;letter-spacing:0px;transform:scaleX(0.9879);">Conic Curve</div>
<div class="t" style="left:151.82px;top:340.98px;font-size:11px;color:#333;font-weight:normal;letter-spacing:0.6px;transform:scaleX(0.8759);">Point</div>
<div class="t" style="left:151.78px;top:362.98px;font-size:11px;color:#333;font-weight:normal;letter-spacing:0.6px;transform:scaleX(0.9533);">Text</div>
<div class="t" style="left:151.75px;top:385.98px;font-size:11px;color:#333;font-weight:normal;letter-spacing:0px;">Mirror</div>
<div class="t" style="left:151.76px;top:408.38px;font-size:11px;color:#333;font-weight:normal;letter-spacing:0px;transform:scaleX(0.9746);">Circular Pattern</div>
<div class="t" style="left:151.76px;top:430.28px;font-size:11px;color:#333;font-weight:normal;letter-spacing:0px;transform:scaleX(0.9738);">Rectangular Pattern</div>
<div class="t" style="left:151.76px;top:452.98px;font-size:11px;color:#333;font-weight:normal;letter-spacing:0px;transform:scaleX(0.9746);">Project / Include</div>
<div class="t" style="left:151.77px;top:475.78px;font-size:11px;color:#333;font-weight:normal;letter-spacing:0px;transform:scaleX(0.9640);">Sketch Dimension</div>
<div class="t" style="left:247.94px;top:142.98px;font-size:11px;color:#333;font-weight:normal;letter-spacing:0px;transform:scaleX(1.1958);">L</div>
<div class="t" style="left:247.80px;top:475.78px;font-size:11px;color:#333;font-weight:normal;letter-spacing:0px;transform:scaleX(1.0959);">D</div>
<div style="left:278.8px;top:445.3px;width:159.4px;height:117px;background:#fff;border:1px solid #8a8a8a;border-radius:3px"></div>
<div style="left:282.8px;top:470px;width:151px;height:22px;background:#d4d4d4"></div>
<svg style="left:0;top:0" width="450" height="600">
<rect x="283" y="492.3" width="151" height="1" fill="#6a6a6a"/><rect x="283" y="515.2" width="151" height="1" fill="#6a6a6a"/>
<circle cx="422.7" cy="476.5" r="1.2" fill="#222"/><circle cx="422.7" cy="481" r="1.2" fill="#222"/><circle cx="422.7" cy="485.5" r="1.2" fill="#222"/>
<path d="M285 457L289 452.5H299L295 457z" fill="#fff" stroke="#555" stroke-width="0.9"/><path d="M289 455.5l2-2h5.5l-2 2z" fill="#3aa0f0"/><path d="M289 458.5v5.5h6.5l3-3v-4" fill="none" stroke="#555" stroke-width="0.9"/>
<path d="M290 460.5h7l2.5-2.5" fill="none" stroke="#3aa0f0" stroke-width="1.4"/>
<path d="M285 479L289 474.5H299L295 479z" fill="#fff" stroke="#555" stroke-width="0.9"/><path d="M289 477.5l2-2h5.5l-2 2z" fill="#3aa0f0"/><path d="M289 480.5v5.5h6.5l3-3v-4" fill="none" stroke="#555" stroke-width="0.9"/>
<path d="M285.5 500l3-3h11v11.5l-3 3h-11z" fill="#e8e8e8" stroke="#555" stroke-width="0.9"/><path d="M288.5 497h11l-3 3h-11z" fill="#4aa6ec"/><path d="M296.5 500l3-3v11.5l-3 3z" fill="#cfcfcf" stroke="#555" stroke-width="0.7"/><path d="M293.5 508.5v5.5M290.8 511.2h5.5" stroke="#f08a24" stroke-width="1.2"/>
<path d="M288 520.5v-1.5h7" fill="none" stroke="#555" stroke-width="0.9"/><path d="M285 532v-6c3-2.5 11-2.5 14 0v6c-3-2.5-11-2.5-14 0z" fill="#fff" stroke="#555" stroke-width="0.9"/><path d="M287 527c2.5-1.8 8.5-1.8 10 0" fill="none" stroke="#3aa0f0" stroke-width="1.1"/>
<path d="M285 543.5h9v10h-9z" fill="#e08a4c"/><path d="M294 543.5l5.5-3.5v10l-5.5 3.5z" fill="#c56a2c"/><path d="M293.5 555.5l2-14.5" stroke="#3aa0f0" stroke-width="1.2"/><path d="M299 541v10" stroke="#e08a4c" stroke-width="1.5"/>
</svg>
<div class="t" style="left:302.25px;top:453.18px;font-size:11px;color:#333;font-weight:normal;letter-spacing:0px;">Project</div>
<div class="t" style="left:302.24px;top:474.98px;font-size:11px;color:#333;font-weight:normal;letter-spacing:0px;transform:scaleX(1.0271);">Intersect</div>
<div class="t" style="left:302.27px;top:497.98px;font-size:11px;color:#333;font-weight:normal;letter-spacing:0px;transform:scaleX(0.9714);">Include 3D Geometry</div>
<div class="t" style="left:302.25px;top:520.98px;font-size:11px;color:#333;font-weight:normal;letter-spacing:0px;">Project To Surface</div>
<div class="t" style="left:302.25px;top:542.98px;font-size:11px;color:#333;font-weight:normal;letter-spacing:0px;">Intersection Curve</div>
<div class="t" style="left:401.64px;top:453.18px;font-size:11px;color:#333;font-weight:normal;letter-spacing:0px;transform:scaleX(1.0101);">P</div>
<div style="left:443.2px;top:474.2px;width:327.5px;height:141px;background:#505050;border-radius:8px"></div>
<div class="t" style="left:456.40px;top:499.71px;font-size:11.5px;color:#fff;font-weight:bold;letter-spacing:0px;transform:scaleX(1.0356);">Projects the points, model edges, work geometries,</div>
<div class="t" style="left:456.40px;top:512.71px;font-size:11.5px;color:#fff;font-weight:bold;letter-spacing:0px;transform:scaleX(1.0510);">and sketch curves that intersect the active sketch</div>
<div class="t" style="left:456.39px;top:525.71px;font-size:11.5px;color:#fff;font-weight:bold;letter-spacing:0px;transform:scaleX(1.0598);">plane.</div>
<div class="t" style="left:456.40px;top:551.71px;font-size:11.5px;color:#fff;font-weight:bold;letter-spacing:0px;transform:scaleX(1.0392);">Use the selection filter to project specific type of</div>
<div class="t" style="left:456.39px;top:564.71px;font-size:11.5px;color:#fff;font-weight:bold;letter-spacing:0px;transform:scaleX(1.0640);">geometry or the entire model.</div>
<div class="t" style="left:456.39px;top:598.41px;font-size:11.5px;color:#fff;font-weight:bold;letter-spacing:0px;transform:scaleX(1.0548);">Press Ctrl+/ for more help.</div>
<div style="left:1664px;top:264px;width:250px;height:422.5px;background:#f1f1f1;border:1px solid #c9c9c9"></div>
<div style="left:1665px;top:288px;width:246px;height:1px;background:#c9c9c9"></div>
<div style="left:1665px;top:650px;width:246px;height:1px;background:#c9c9c9"></div>
<div style="left:1820px;top:659px;width:82px;height:20px;background:#efefef;border:1px solid #adadad"></div>
<svg style="left:1600px;top:250px" width="310" height="450" viewBox="1600 250 310 450">
<path d="M1668.5 271.3v10.6M1666.4 273.3v6.6" stroke="#666" stroke-width="0.9" stroke-linecap="round"/><circle cx="1680.5" cy="276.3" r="4.6" fill="#333"/><path d="M1678 276.3h5" stroke="#f1f1f1" stroke-width="1.3"/>
<path d="M1899.5 272.5l4.5 3.5-4.5 3.5zM1904.5 272.5l4.5 3.5-4.5 3.5z" fill="#222"/>
<path d="M1674.8 299.8h8.5l-4.25 6z" fill="#222"/>
<path d="M1829 334.4h16" stroke="#e8782a" stroke-width="1.3" stroke-dasharray="2.5 1.8"/><path d="M1832 333l11-6M1834 336l10 6" stroke="#555" stroke-width="0.9"/><path d="M1842.5 325.5l1 2.5M1842.5 341.5l1-2.5M1842.4 332v5" stroke="#e8782a" stroke-width="1.2"/>
<path d="M1868 326.5h-6.5a2.5 2.5 0 0 0 -2.5 2.5v9a2.5 2.5 0 0 0 2.5 2.5h6.5v-2h4.5v-10h-4.5z" fill="none" stroke="#aaa" stroke-width="1"/><path d="M1858.5 333.4h15" stroke="#f0a070" stroke-width="1" stroke-dasharray="3 2"/>
<path d="M1830 361l4-4v3l5-1.5 2.5-.5v3" fill="#c0c4cc" stroke="#333" stroke-width="0.9"/><rect x="1829.7" y="361.3" width="15" height="10.2" rx="1" fill="#fff" stroke="#333" stroke-width="1.2"/><rect x="1832.5" y="364.3" width="9.3" height="4.4" fill="#b9bdc6" stroke="#333" stroke-width="1"/>
<defs><linearGradient id="cbg" x1="0" y1="0" x2="0" y2="1"><stop offset="0" stop-color="#a9a9a9"/><stop offset="1" stop-color="#ececec"/></linearGradient><linearGradient id="cbu" x1="0" y1="0" x2="0" y2="1"><stop offset="0" stop-color="#fdfdfd"/><stop offset="1" stop-color="#c8c8c8"/></linearGradient></defs>
<rect x="1830.8" y="387.6" width="12.6" height="12.4" rx="2.2" fill="url(#cbu)" stroke="#4a4a4a" stroke-width="1.1"/>
<rect x="1830.8" y="417.6" width="12.6" height="12.4" rx="2.2" fill="url(#cbu)" stroke="#4a4a4a" stroke-width="1.1"/>
<rect x="1830.8" y="447.6" width="12.6" height="12.4" rx="2.2" fill="url(#cbu)" stroke="#4a4a4a" stroke-width="1.1"/>
<rect x="1830.8" y="477.6" width="12.6" height="12.4" rx="2.2" fill="url(#cbg)" stroke="#4a4a4a" stroke-width="1.1"/><path d="M1833.6 484.5l2.6 3 4.8-7.2" fill="none" stroke="#000" stroke-width="1.4"/>
<rect x="1830.8" y="507.6" width="12.6" height="12.4" rx="2.2" fill="url(#cbg)" stroke="#4a4a4a" stroke-width="1.1"/><path d="M1833.6 514.5l2.6 3 4.8-7.2" fill="none" stroke="#000" stroke-width="1.4"/>
<rect x="1830.8" y="537.6" width="12.6" height="12.4" rx="2.2" fill="url(#cbg)" stroke="#4a4a4a" stroke-width="1.1"/><path d="M1833.6 544.5l2.6 3 4.8-7.2" fill="none" stroke="#000" stroke-width="1.4"/>
<rect x="1830.8" y="567.6" width="12.6" height="12.4" rx="2.2" fill="url(#cbg)" stroke="#4a4a4a" stroke-width="1.1"/><path d="M1833.6 574.5l2.6 3 4.8-7.2" fill="none" stroke="#000" stroke-width="1.4"/>
<rect x="1830.8" y="597.6" width="12.6" height="12.4" rx="2.2" fill="url(#cbg)" stroke="#4a4a4a" stroke-width="1.1"/><path d="M1833.6 604.5l2.6 3 4.8-7.2" fill="none" stroke="#000" stroke-width="1.4"/>
<rect x="1830.8" y="627.6" width="12.6" height="12.4" rx="2.2" fill="url(#cbu)" stroke="#4a4a4a" stroke-width="1.1"/>
</svg>
<div class="t" style="left:1688.91px;top:269.74px;font-size:12px;color:#555;font-weight:normal;letter-spacing:0px;transform:scaleX(0.8231);">SKETCH PALETTE</div>
<div class="t" style="left:1688.43px;top:297.44px;font-size:12px;color:#333;font-weight:bold;letter-spacing:0px;transform:scaleX(0.9518);">Options</div>
<div class="t" style="left:1676.65px;top:327.98px;font-size:11px;color:#333;font-weight:normal;letter-spacing:0px;transform:scaleX(1.0077);">Linetype</div>
<div class="t" style="left:1676.66px;top:357.98px;font-size:11px;color:#333;font-weight:normal;letter-spacing:0px;transform:scaleX(0.9889);">Look At</div>
<div class="t" style="left:1676.66px;top:387.98px;font-size:11px;color:#333;font-weight:normal;letter-spacing:0px;transform:scaleX(0.9900);">Sketch Grid</div>
<div class="t" style="left:1676.64px;top:417.98px;font-size:11px;color:#333;font-weight:normal;letter-spacing:0px;transform:scaleX(1.0167);">Snap</div>
<div class="t" style="left:1676.64px;top:447.98px;font-size:11px;color:#333;font-weight:normal;letter-spacing:0px;transform:scaleX(1.0113);">Slice</div>
<div class="t" style="left:1676.64px;top:477.98px;font-size:11px;color:#333;font-weight:normal;letter-spacing:0px;transform:scaleX(1.0222);">Show Profile</div>
<div class="t" style="left:1676.64px;top:507.98px;font-size:11px;color:#333;font-weight:normal;letter-spacing:0px;transform:scaleX(1.0093);">Show Points</div>
<div class="t" style="left:1676.65px;top:537.98px;font-size:11px;color:#333;font-weight:normal;letter-spacing:0px;transform:scaleX(0.9950);">Show Dimensions</div>
<div class="t" style="left:1676.64px;top:567.98px;font-size:11px;color:#333;font-weight:normal;letter-spacing:0px;transform:scaleX(1.0164);">Show Constraints</div>
<div class="t" style="left:1676.66px;top:597.98px;font-size:11px;color:#333;font-weight:normal;letter-spacing:0px;transform:scaleX(0.9886);">Show Projected Geometries</div>
<div class="t" style="left:1676.66px;top:627.98px;font-size:11px;color:#333;font-weight:normal;letter-spacing:0px;transform:scaleX(0.9789);">3D Sketch</div>
<div class="t" style="left:1823.78px;top:662.64px;font-size:12px;color:#555;font-weight:normal;letter-spacing:0px;transform:scaleX(1.0306);">Finish Sketch</div>
<div style="left:2px;top:957px;width:300px;height:24.5px;background:#f1f1f1;border:1px solid #cfcfcf"></div>
<div class="t" style="left:27.01px;top:962.74px;font-size:12px;color:#555;font-weight:normal;letter-spacing:0px;transform:scaleX(0.8140);">COMMENTS</div>
<svg style="left:0;top:950px" width="310" height="40" viewBox="0 950 310 40"><circle cx="285" cy="969.3" r="4.7" fill="#222"/><path d="M282.2 969.3h5.6M285 966.5v5.6" stroke="#fff" stroke-width="1.3"/><path d="M297.5 963.8v10.6M299.5 965.8v6.6" stroke="#777" stroke-width="0.9" stroke-linecap="round"/></svg>
<div style="left:839px;top:958px;width:237px;height:23.5px;background:#f1f1f1"></div>
<svg style="left:830px;top:950px" width="260" height="40" viewBox="830 950 260 40">
<ellipse cx="850" cy="969.5" rx="7.5" ry="4" fill="none" stroke="#555" stroke-width="1"/><ellipse cx="850" cy="969.5" rx="3.5" ry="7.6" fill="none" stroke="#555" stroke-width="1"/><path d="M849 969.5h3M850.5 968v3" stroke="#1a8ee8" stroke-width="1.3"/>
<path d="M864 968.5h5.5l-2.75 3.6z" fill="#333"/>
<path d="M876 963l3-3v2l3-1 3.5-1v2.5" fill="#c0c4cc" stroke="#333" stroke-width="0.9"/><rect x="875.5" y="963.5" width="15" height="11" rx="1" fill="#fff" stroke="#333" stroke-width="1.1"/><rect x="878.5" y="966.5" width="9" height="4.5" fill="#b9bdc6" stroke="#333" stroke-width="0.9"/>
<path d="M903 970c-1.5-1.5-2.5-1-2 .5l3 4.5c1 1.5 2 2.5 5 2.5 3.5 0 5-2 5-5.5v-6c0-1-1.5-1-1.5 0v3.5-6c0-1-1.6-1-1.6 0v5.5-7c0-1-1.6-1-1.6 0v7-6c0-1-1.6-1-1.6 0v8.5z" fill="#fff" stroke="#444" stroke-width="0.9"/>
<circle cx="931.5" cy="968.5" r="4.6" fill="#e8f0f0" stroke="#333" stroke-width="1.1"/><path d="M934.8 971.8l3.5 3.5" stroke="#333" stroke-width="2.2"/><path d="M937.5 963h4M939.5 961v4M937.5 966.5h4" stroke="#333" stroke-width="0.9"/>
<rect x="953.5" y="962" width="15.5" height="15" fill="none" stroke="#555" stroke-width="0.8" stroke-dasharray="1.2 1.2"/><circle cx="959.5" cy="968.5" r="5" fill="#e8f0f0" stroke="#333" stroke-width="1.1"/><path d="M963 972l4 4" stroke="#333" stroke-width="2.2"/>
<path d="M972 968.5h5.5l-2.75 3.6z" fill="#333"/>
<rect x="986.2" y="962" width="15.8" height="12.5" rx="1.2" fill="#555"/><rect x="988" y="963.8" width="12.2" height="8.9" fill="#a9c3e8"/><path d="M991.8 975.5h4.6M990 977.3h8.2" stroke="#666" stroke-width="1.2"/>
<path d="M1004.2 968.5h5.5l-2.75 3.6z" fill="#333"/>
<rect x="1017.2" y="962" width="15.6" height="15.8" rx="1" fill="#bdbdbd" stroke="#5e5e5e" stroke-width="1.1"/><path d="M1020.32 962v15.8M1017.2 965.16h15.6M1023.44 962v15.8M1017.2 968.32h15.6M1026.56 962v15.8M1017.2 971.48h15.6M1029.68 962v15.8M1017.2 974.64h15.6" stroke="#777" stroke-width="0.9"/>
<path d="M1035.3 968.5h5.5l-2.75 3.6z" fill="#333"/>
<rect x="1048" y="962.5" width="15.5" height="14.5" fill="#3559a8" rx="1"/><rect x="1049.5" y="964" width="5.5" height="5" fill="#a8c0ea"/><rect x="1056.5" y="964" width="5.5" height="5" fill="#a8c0ea"/><rect x="1049.5" y="970.5" width="5.5" height="5" fill="#a8c0ea"/><rect x="1056.5" y="970.5" width="5.5" height="5" fill="#a8c0ea"/>
<path d="M1066.3 968.5h5.5l-2.75 3.6z" fill="#333"/>
</svg>
<svg style="left:0;top:986px" width="700" height="54" viewBox="0 986 700 54">
<defs>
<symbol id="tImg" viewBox="0 0 15 14" overflow="visible"><rect x="0" y="0" width="14.4" height="13.8" fill="#2f86d0"/><rect x="1" y="1" width="12.4" height="11.8" fill="#8ccdf7"/><path d="M1 12.8V8c1.5-2 3-3.5 4.5-3.5 1.8 0 3 3 4.5 3 1.5 0 2-1.5 3.4-1.5v6.8z" fill="#3a8fd5"/><circle cx="10.3" cy="3.8" r="1.8" fill="#fbf1b2"/></symbol>
<symbol id="tSk" viewBox="0 0 17 15" overflow="visible"><path d="M1 1v13M1 14h9M1 1h13M14 1v7" fill="none" stroke="#333" stroke-width="1" stroke-dasharray="2.2 1.5"/><rect x="0" y="0" width="2" height="2" fill="#0a8ee8"/><rect x="13" y="0" width="2" height="2" fill="#0a8ee8"/><rect x="0" y="13" width="2" height="2" fill="#0a8ee8"/><path d="M9 14.5l5.5-5.5 1.6 1.6-5.5 5.5-2.2.6z" fill="#f3b724"/><path d="M14.5 9l1.2-1.2 1.6 1.6-1.2 1.2z" fill="#e8313a"/></symbol>
<symbol id="tEx" viewBox="0 0 17 15" overflow="visible"><path d="M0 14.5h10.5l2.5-2.5V13l-2.5 2.5H0z" fill="#c9c9c9"/><path d="M0 3l3-3h9.5v10L10 13H0z" fill="#5aa9e6"/><path d="M0 3l3-3h9.5L10 3z" fill="#86c6f5"/><path d="M10 3l2.5-3v10L10 13z" fill="#3b86c6"/><path d="M15 14V2" stroke="#222" stroke-width="1.3"/><path d="M15 0.5l-2 3h4z" fill="#222"/></symbol>
<symbol id="tMi" viewBox="0 0 15 14" overflow="visible"><path d="M6.2 0.8v12.7H0.8z" fill="none" stroke="#444" stroke-width="1.1"/><path d="M7.8 0.5v13.3h6.6z" fill="#5aa9e6"/></symbol>
</defs>
<path d="M9.9 1003.8v13.8" stroke="#444" stroke-width="2"/><path d="M21 1003.2v15l-9.5-7.5z" fill="#444"/>
<path d="M43.2 1004v13.5l-9.9-6.75z" fill="#444"/><rect x="44.2" y="1008.2" width="2.1" height="5.2" fill="#444"/>
<path d="M58.7 1003v15.5l12.1-7.75z" fill="#444"/>
<rect x="83" y="1008.2" width="2.1" height="5.2" fill="#444"/><path d="M86 1004v13.5l9.6-6.75z" fill="#444"/>
<path d="M108.8 1003.2v15l10.4-7.5z" fill="#444"/><path d="M120.3 1003.8v13.8" stroke="#444" stroke-width="2"/>
<path d="M152 1026.6H632.6" stroke="#c6c6c6" stroke-width="2"/>
<path d="M152.6 1021v5" stroke="#c6c6c6" stroke-width="2"/>
<use href="#tImg" x="144.5" y="1003" width="15" height="14"/>
<path d="M176.6 1021v5" stroke="#c6c6c6" stroke-width="2"/>
<use href="#tImg" x="168.5" y="1003" width="15" height="14"/>
<path d="M200.5 1021v5" stroke="#c6c6c6" stroke-width="2"/>
<use href="#tSk" x="192.0" y="1002.5" width="17" height="15"/>
<path d="M224.5 1021v5" stroke="#c6c6c6" stroke-width="2"/>
<use href="#tEx" x="217.2" y="1002.5" width="17" height="15"/>
<path d="M248.5 1021v5" stroke="#c6c6c6" stroke-width="2"/>
<use href="#tSk" x="240.0" y="1002.5" width="17" height="15"/>
<path d="M272.4 1021v5" stroke="#c6c6c6" stroke-width="2"/>
<use href="#tEx" x="265.1" y="1002.5" width="17" height="15"/>
<path d="M296.4 1021v5" stroke="#c6c6c6" stroke-width="2"/>
<use href="#tMi" x="289.3" y="1003.5" width="15" height="14"/>
<path d="M320.4 1021v5" stroke="#c6c6c6" stroke-width="2"/>
<use href="#tSk" x="311.9" y="1002.5" width="17" height="15"/>
<path d="M344.4 1021v5" stroke="#c6c6c6" stroke-width="2"/>
<use href="#tEx" x="337.1" y="1002.5" width="17" height="15"/>
<path d="M368.3 1021v5" stroke="#c6c6c6" stroke-width="2"/>
<use href="#tEx" x="361.0" y="1002.5" width="17" height="15"/>
<path d="M392.3 1021v5" stroke="#c6c6c6" stroke-width="2"/>
<use href="#tMi" x="385.2" y="1003.5" width="15" height="14"/>
<path d="M416.3 1021v5" stroke="#c6c6c6" stroke-width="2"/>
<use href="#tSk" x="407.8" y="1002.5" width="17" height="15"/>
<path d="M440.2 1021v5" stroke="#c6c6c6" stroke-width="2"/>
<use href="#tEx" x="432.9" y="1002.5" width="17" height="15"/>
<path d="M464.2 1021v5" stroke="#c6c6c6" stroke-width="2"/>
<use href="#tEx" x="456.9" y="1002.5" width="17" height="15"/>
<path d="M488.2 1021v5" stroke="#c6c6c6" stroke-width="2"/>
<use href="#tSk" x="479.7" y="1002.5" width="17" height="15"/>
<path d="M512.1 1021v5" stroke="#c6c6c6" stroke-width="2"/>
<use href="#tEx" x="504.8" y="1002.5" width="17" height="15"/>
<path d="M536.1 1021v5" stroke="#c6c6c6" stroke-width="2"/>
<use href="#tEx" x="528.8" y="1002.5" width="17" height="15"/>
<path d="M560.1 1021v5" stroke="#c6c6c6" stroke-width="2"/>
<use href="#tMi" x="553.0" y="1003.5" width="15" height="14"/>
<path d="M584.1 1021v5" stroke="#c6c6c6" stroke-width="2"/>
<use href="#tMi" x="577.0" y="1003.5" width="15" height="14"/>
<path d="M608.0 1021v5" stroke="#c6c6c6" stroke-width="2"/>
<rect x="600.0" y="1010" width="7" height="7.5" fill="#d6d6d6" stroke="#555" stroke-width="0.8"/><path d="M606.5 1001.5l7.5 7.5-7.5 7.5-7.5-7.5z" fill="#d98b50"/><path d="M605.0 1009.5l3 -4" stroke="#3cba5a" stroke-width="1.2" stroke-dasharray="1.5 1"/>
<path d="M632.0 1021v5" stroke="#c6c6c6" stroke-width="2"/>
<use href="#tSk" x="623.5" y="1002.5" width="17" height="15"/>
<path d="M638 995.9h12l-4 8.5h-4z" fill="#555"/><rect x="643.3" y="1003" width="1.8" height="25" fill="#555"/>
</svg>
<svg style="left:1880px;top:995px" width="30" height="30" viewBox="1880 995 30 30"><g transform="translate(1896.9 1010.9)" fill="#999"><circle r="5.4"/><rect x="-1.6" y="-7.9" width="3.2" height="4" transform="rotate(0)"/><rect x="-1.6" y="-7.9" width="3.2" height="4" transform="rotate(45)"/><rect x="-1.6" y="-7.9" width="3.2" height="4" transform="rotate(90)"/><rect x="-1.6" y="-7.9" width="3.2" height="4" transform="rotate(135)"/><rect x="-1.6" y="-7.9" width="3.2" height="4" transform="rotate(180)"/><rect x="-1.6" y="-7.9" width="3.2" height="4" transform="rotate(225)"/><rect x="-1.6" y="-7.9" width="3.2" height="4" transform="rotate(270)"/><rect x="-1.6" y="-7.9" width="3.2" height="4" transform="rotate(315)"/></g><circle cx="1896.9" cy="1010.9" r="2.7" fill="#f1f1f1"/></svg>
<svg style="left:0;top:1040px" width="1910" height="39" viewBox="0 1040 1910 39">
<rect x="0" y="1040" width="46.5" height="39" fill="#15191c"/>
<rect x="46.5" y="1040" width="287" height="39" fill="#363738"/>
<rect x="258" y="1043.8" width="71.5" height="32" rx="4" fill="#1a2530"/>
<text x="294" y="1063" font-size="10" font-weight="bold" font-style="italic" fill="#1e73c8" text-anchor="middle" font-family="Liberation Sans">Amsted</text><text x="294" y="1067.5" font-size="3.5" fill="#1e73c8" text-anchor="middle" font-family="Liberation Sans" letter-spacing="1">INDUSTRIES</text>
<path d="M14 1053.5l7.5-1v7.2H14zM22.5 1052.3l8.5-1.2v8.6h-8.5zM14 1060.7h7.5v7.2l-7.5-1zM22.5 1060.7H31v8.6l-8.5-1.2z" fill="#fff"/>
<circle cx="67.5" cy="1058.5" r="4.8" fill="none" stroke="#ddd" stroke-width="1.2"/><path d="M64 1062l-5.5 5.5" stroke="#ddd" stroke-width="1.3"/>
<path d="M351 1052.5h9M351 1067.5h9M351 1055.5h9v9h-9z" fill="none" stroke="#fff" stroke-width="1.2"/><path d="M363 1052v4M363 1058.5v10" stroke="#fff" stroke-width="1.3"/>
<path d="M397.5 1050.5h8l2 2h12.5v16h-22.5z" fill="#f0b43a"/><path d="M397.5 1055h22.5v13.5h-22.5z" fill="#fcd462"/><path d="M403 1063h11.5v6.5h-2.5v-3.5h-6.5v3.5H403z" fill="#1e7fd6"/>
<defs><linearGradient id="ieg" x1="0" y1="0" x2="0" y2="1"><stop offset="0" stop-color="#2a9de0"/><stop offset="0.5" stop-color="#8eeafc"/><stop offset="1" stop-color="#2a8fd8"/></linearGradient></defs><text x="458.3" y="1070.3" font-size="39" font-weight="bold" fill="url(#ieg)" text-anchor="middle" font-family="Liberation Sans" textLength="20" lengthAdjust="spacingAndGlyphs">e</text><path d="M449.5 1070.5c-4-3-1-12 5-17 5-4 9.5-5.5 12-4.5 1.5 .8 1 3-.5 5" fill="none" stroke="#f0b820" stroke-width="1.8"/>
<rect x="504" y="1052.5" width="14" height="12" fill="#fff"/><path d="M504 1053l7 5.5 7-5.5" fill="none" stroke="#0a64b8" stroke-width="1.2"/><path d="M495 1052l11-2.5v21l-11-2.5z" fill="#0a64b8"/><ellipse cx="500" cy="1060" rx="2.6" ry="3.5" fill="none" stroke="#fff" stroke-width="1.5"/>
<rect x="487" y="1077.5" width="40" height="1.5" fill="#76b9ed"/><rect x="536" y="1077.5" width="40" height="1.5" fill="#76b9ed"/><rect x="683" y="1077.5" width="40" height="1.5" fill="#76b9ed"/>
<rect x="878" y="1077.5" width="40" height="1.5" fill="#76b9ed"/><rect x="927" y="1077.5" width="40" height="1.5" fill="#76b9ed"/><rect x="973" y="1077.5" width="48" height="1.5" fill="#76b9ed"/>
<circle cx="555.5" cy="1060" r="12" fill="#db3b2f"/><path d="M555.5 1060L565.9 1066A12 12 0 0 1 545.1 1066z" fill="#1f9d52"/><path d="M555.5 1060L545.1 1066A12 12 0 0 1 545.1 1054 L555.5 1048z" fill="#db3b2f"/><path d="M555.5 1048A12 12 0 0 1 565.9 1066L555.5 1060z" fill="#fcc934"/><circle cx="555.5" cy="1060" r="5.4" fill="#fff"/><circle cx="555.5" cy="1060" r="4.2" fill="#1a73e8"/>
<path d="M594 1051l16-2v10l-16 9z" fill="#2f6db5"/><path d="M600 1068c6 0 13-3 15-12 1 5-1 13-8 16-3 1-5 0-7-4z" fill="#f3a82a"/><path d="M603 1058c4 2 6 5 5 8" stroke="#ffd24a" stroke-width="3" fill="none"/>
<path d="M646 1049h20v16l-4 5h-20v-16z" fill="#9acd32"/><path d="M660 1055h-8.5v9.5h8.5" fill="none" stroke="#111" stroke-width="3.5"/>
<ellipse cx="703" cy="1058.5" rx="11" ry="6.5" transform="rotate(-15 703 1058.5)" fill="#e8e8e8" stroke="#d64545" stroke-width="1.2"/><path d="M704 1051l2 11M712 1052l-8 9" stroke="#555" stroke-width="1"/><circle cx="713" cy="1066" r="2.5" fill="none" stroke="#1e90ff" stroke-width="1.4"/><circle cx="708" cy="1068" r="2.5" fill="none" stroke="#1e90ff" stroke-width="1.4"/>
<rect x="740" y="1048" width="24" height="24" fill="#f5e6e6"/><path d="M743 1070l7-19h5l6.5 19h-4.5l-4-13-5 13z" fill="#c8202a"/>
<rect x="788.5" y="1048" width="24" height="24" fill="#d8ecf8"/><text x="800.5" y="1059" font-size="10" font-weight="bold" fill="#e0252a" text-anchor="middle" font-family="Liberation Sans">TL75</text><path d="M790.5 1066h20M795 1061.5v9M802 1061.5v9M799 1070l4-8" stroke="#333" stroke-width="0.9"/>
<circle cx="849" cy="1060" r="12" fill="#1a8fe0"/><path d="M838 1057c2-7 9-9 14-8 6 1 9 6 9 10 0 3-3 4-6 4h-7c0 4 4 6 8 6 2 0 3 0 5-1-2 3-6 4-9 4-6 0-10-5-10-9 0-3 2-5 5-6-4 0-7 1-9 0z" fill="#43d39e"/>
<circle cx="903" cy="1052" r="3.8" fill="#7b83eb"/><circle cx="909" cy="1054" r="2.8" fill="#5059c9"/><path d="M895 1056h14v10a7 7 0 0 1-14 0z" fill="#7b83eb"/><rect x="887" y="1053.5" width="13" height="13" rx="1.5" fill="#4b53bc"/><path d="M890 1056.5h7M893.5 1056.5v7.5" stroke="#fff" stroke-width="1.8"/><circle cx="906" cy="1068" r="3.8" fill="#62b76a" stroke="#2b2c2d" stroke-width="0.8"/><path d="M904.2 1068l1.3 1.3 2.3-2.5" stroke="#fff" stroke-width="1" fill="none"/>
<rect x="936.5" y="1049" width="21" height="21" rx="3" fill="#b30b00"/><path d="M940 1066c3-3 6-9 7-14 0-2-1.5-2-1.5 0 0 5 5 11 9 11 1.5 0 1.5-1.5 0-1.5-4 0-10 2-14.5 4.5z" fill="none" stroke="#fff" stroke-width="1.3"/>
<rect x="973" y="1040" width="48" height="39" fill="#4a4c4e"/>
<rect x="984.5" y="1048.5" width="21" height="21.5" rx="2.5" fill="#ff7a1a"/><rect x="985" y="1064" width="20" height="6.5" rx="1" fill="#a24012"/><path d="M991.5 1052h7v2.3h-4.5v2.5h4v2.2h-4v3.5h-2.5z" fill="#fff"/><text x="995" y="1069.5" font-size="5" font-weight="bold" fill="#f5c9a8" text-anchor="middle" font-family="Liberation Sans">360</text>
<circle cx="1575.5" cy="1060" r="10" fill="#f08c1e"/><circle cx="1573" cy="1057" r="7" fill="#f5a524" opacity="0.7"/><circle cx="1584.5" cy="1052" r="2.5" fill="#e03a2a"/>
<path d="M1687 1063.5l5-5 5 5" fill="none" stroke="#fff" stroke-width="1.3"/>
<rect x="1713" y="1057" width="14.5" height="7" fill="none" stroke="#fff" stroke-width="1.2"/><rect x="1714.5" y="1058.5" width="10" height="4" fill="#fff"/><path d="M1727.5 1059v3" stroke="#fff" stroke-width="1.5"/><path d="M1709 1058v-4M1711.5 1058v-4M1708 1058h5v2h-5z" stroke="#fff" stroke-width="0.8" fill="none"/>
<path d="M1733.5 1054.5l12-2v13l-12 1z" fill="none" stroke="#fff" stroke-width="1.2"/><path d="M1738 1058c2-2 4-1 4 1M1742 1061c-2 2-4 1-4-1" fill="none" stroke="#fff" stroke-width="1"/><circle cx="1744" cy="1066" r="3" fill="#f5a524"/>
<rect x="1757.5" y="1053.5" width="15" height="10" fill="none" stroke="#fff" stroke-width="1.1"/><path d="M1765 1063.5v3.5M1761 1067h8" stroke="#fff" stroke-width="1.1"/><rect x="1755" y="1052" width="6" height="5" fill="#2b2b2b" stroke="#fff" stroke-width="0.9"/>
<path d="M1780.5 1057h3l4-3.5v13l-4-3.5h-3z" fill="none" stroke="#fff" stroke-width="1.1"/><path d="M1790 1057.5c1.2 1.5 1.2 3.5 0 5M1792.5 1055.5c2.3 2.5 2.3 6.5 0 9M1795 1053.5c3.3 3.5 3.3 9.5 0 13" fill="none" stroke="#ddd" stroke-width="0.9"/>
<path d="M1876.5 1047.5h16.5v13h-9l-4.5 3.5v-3.5h-3z" fill="#fff"/><path d="M1879 1051h11.5M1879 1053.8h11.5M1879 1056.6h8" stroke="#333" stroke-width="0.9"/><circle cx="1893" cy="1066.5" r="6.8" fill="#222" stroke="#777" stroke-width="1"/><text x="1893" y="1070.5" font-size="11" font-weight="bold" fill="#fff" text-anchor="middle" font-family="Liberation Sans">4</text>
</svg>
<div class="t" style="left:85.97px;top:1053.04px;font-size:14px;color:#ddd;font-weight:normal;letter-spacing:0px;transform:scaleX(1.0381);">Type here to search</div>
<div class="t" style="left:1594.92px;top:1053.89px;font-size:13px;color:#fff;font-weight:normal;letter-spacing:0px;transform:scaleX(1.0418);">46°F</div>
<div class="t" style="left:1631.31px;top:1053.89px;font-size:13px;color:#fff;font-weight:normal;letter-spacing:0px;transform:scaleX(1.0686);">Sunny</div>
<div class="t" style="left:1810.41px;top:1044.44px;font-size:12px;color:#fff;font-weight:normal;letter-spacing:0px;transform:scaleX(0.9864);">9:36 AM</div>
<div class="t" style="left:1809.40px;top:1061.84px;font-size:12px;color:#fff;font-weight:normal;letter-spacing:0px;">2/6/2023</div>
</body></html>
